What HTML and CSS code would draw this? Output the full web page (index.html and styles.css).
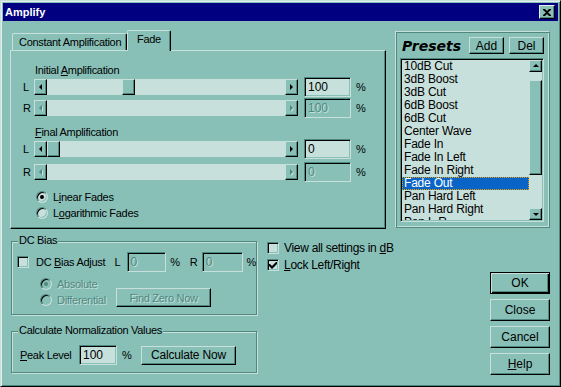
FILE: index.html
```html
<!DOCTYPE html>
<html>
<head>
<meta charset="utf-8">
<title>Amplify</title>
<link rel="stylesheet" href="styles.css">
</head>
<body>
<div class="window">
  <div class="titlebar">
    <span class="title">Amplify</span>
    <span class="closebtn"><svg width="8" height="7" viewBox="0 0 8 7"><path d="M0 0h2l2 2 2-2h2v1L5 3.5 8 6v1H6L4 5 2 7H0V6l3-2.5L0 1z" fill="#000"/></svg></span>
  </div>

  <div class="top">
    <div class="tabarea">
      <div class="tabs">
        <div class="tab">Constant Amplification</div>
        <div class="tab active">Fade</div>
      </div>
      <div class="panel">
        <div class="caption">Initial <u>A</u>mplification</div>
        <div class="row">
          <span class="ch">L</span>
          <div class="hscroll">
            <span class="sbtn"><i class="arr al"></i></span>
            <div class="track"><span class="thumb" style="margin-left:75px"></span></div>
            <span class="sbtn"><i class="arr ar"></i></span>
          </div>
          <div class="edit">100</div><span class="pct">%</span>
        </div>
        <div class="row row-b">
          <span class="ch">R</span>
          <div class="hscroll">
            <span class="sbtn"><i class="arr al off"></i></span>
            <div class="track"></div>
            <span class="sbtn"><i class="arr ar off"></i></span>
          </div>
          <div class="edit off">100</div><span class="pct">%</span>
        </div>
        <div class="caption caption-b"><u>F</u>inal Amplification</div>
        <div class="row">
          <span class="ch">L</span>
          <div class="hscroll">
            <span class="sbtn"><i class="arr al"></i></span>
            <div class="track"><span class="thumb" style="margin-left:0px"></span></div>
            <span class="sbtn"><i class="arr ar"></i></span>
          </div>
          <div class="edit">0</div><span class="pct">%</span>
        </div>
        <div class="row row-d">
          <span class="ch">R</span>
          <div class="hscroll">
            <span class="sbtn"><i class="arr al off"></i></span>
            <div class="track"></div>
            <span class="sbtn"><i class="arr ar off"></i></span>
          </div>
          <div class="edit off">0</div><span class="pct">%</span>
        </div>
        <div class="radio radio-a"><span class="rb on"></span><span>L<u>i</u>near Fades</span></div>
        <div class="radio radio-b"><span class="rb"></span><span>L<u>o</u>garithmic Fades</span></div>
      </div>
    </div>

    <div class="presets">
      <div class="presets-head">
        <span class="presets-title">Presets</span>
        <span class="btn small add">Add</span>
        <span class="btn small del">Del</span>
      </div>
      <div class="listbox">
        <div class="items">
          <div class="item">10dB Cut</div>
          <div class="item">3dB Boost</div>
          <div class="item">3dB Cut</div>
          <div class="item">6dB Boost</div>
          <div class="item">6dB Cut</div>
          <div class="item">Center Wave</div>
          <div class="item">Fade In</div>
          <div class="item">Fade In Left</div>
          <div class="item">Fade In Right</div>
          <div class="item sel">Fade Out</div>
          <div class="item">Pan Hard Left</div>
          <div class="item">Pan Hard Right</div>
          <div class="item">Pan L-R</div>
        </div>
        <div class="vscroll">
          <span class="vbtn"><i class="arr au"></i></span>
          <div class="vtrack"><span class="vthumb"></span></div>
          <span class="vbtn"><i class="arr ad"></i></span>
        </div>
      </div>
    </div>
  </div>

  <div class="bottom">
    <div class="groups">
      <div class="group dc">
        <div class="gtitle">DC Bias</div>
        <div class="dcrow">
          <span class="cb"></span>
          <span class="cblabel">DC <u>B</u>ias Adjust</span>
          <span class="lr">L</span>
          <div class="edit off small-edit">0</div><span class="pct2">%</span>
          <span class="lr lr-r">R</span>
          <div class="edit off small-edit r-edit">0</div><span class="pct2">%</span>
        </div>
        <div class="dclow">
          <div class="dcradios">
            <div class="radio2"><span class="rb dim on"></span><span class="dis">Absolute</span></div>
            <div class="radio2 r2b"><span class="rb dim"></span><span class="dis">Differential</span></div>
          </div>
          <span class="btn findzero dis">Find Zero Now</span>
        </div>
      </div>
      <div class="group norm">
        <div class="gtitle">Calculate Normalization Values</div>
        <div class="normrow">
          <span class="peak"><u>P</u>eak Level</span>
          <div class="edit peak-edit">100</div><span class="pct3">%</span>
          <span class="btn calc">Calculate Now</span>
        </div>
      </div>
    </div>

    <div class="checks">
      <div class="check"><span class="cb"></span><span>View all settings in <u>d</u>B</span></div>
      <div class="check"><span class="cb"><svg width="8" height="8" viewBox="0 0 8 8"><path d="M0 3l1 0 2 2 4-4 1 0 0 2-5 5-3-3z" fill="#000"/></svg></span><span><u>L</u>ock Left/Right</span></div>
    </div>

    <div class="buttons">
      <span class="btn big default">OK</span>
      <span class="btn big">Close</span>
      <span class="btn big">Cancel</span>
      <span class="btn big"><u>H</u>elp</span>
    </div>
  </div>
</div>
</body>
</html>
```

FILE: styles.css
```css
:root {
  --face: #88c0b8;
  --light: #c8e0dc;
  --hi: #e0f0ec;
  --shadow: #508880;
  --dark: #000;
  --navy: #000080;
}

* { box-sizing: border-box; margin: 0; padding: 0; }

body {
  margin: 0;
  background: var(--face);
  font: 11px "Liberation Sans", Arial, sans-serif;
  letter-spacing: -0.3px;
  color: #000;
}

u { text-decoration: underline; text-underline-offset: 1px; }

.window {
  width: 561px;
  height: 387px;
  background: var(--face);
  border: 1px solid;
  border-color: var(--light) var(--dark) var(--dark) var(--light);
  box-shadow: inset 1px 1px 0 var(--hi), inset -1px -1px 0 var(--shadow);
  padding: 2px;
}

/* title bar */
.titlebar {
  height: 18px;
  background: var(--navy);
  display: flex;
  align-items: center;
  justify-content: space-between;
  padding: 0 3px 0 2px;
}
.title {
  color: #fff;
  font-weight: bold;
  letter-spacing: 0;
}
.closebtn {
  width: 16px;
  height: 14px;
  background: var(--face);
  border: 1px solid;
  border-color: var(--hi) var(--dark) var(--dark) var(--hi);
  box-shadow: inset -1px -1px 0 var(--shadow);
  display: flex;
  align-items: center;
  justify-content: center;
  padding-right: 1px;
}

/* top area */
.top {
  display: flex;
  margin-top: 9px;
  padding-left: 7px;
}
.tabarea { width: 376px; }
.tabs {
  height: 20px;
  display: flex;
  align-items: flex-end;
  padding-left: 2px;
}
.tab {
  height: 17px;
  padding: 2px 0 0 6px;
  width: 115px;
  background: var(--face);
  border-top: 1px solid var(--light);
  border-left: 1px solid var(--light);
  border-right: 1px solid var(--dark);
  box-shadow: inset -1px 0 0 var(--shadow);
  border-radius: 2px 2px 0 0;
  line-height: 13px;
}
.tab.active {
  width: 44px;
  height: 21px;
  margin-bottom: -1px;
  padding: 2px 0 0 9px;
  position: relative;
  z-index: 1;
}
.panel {
  height: 179px;
  border: 1px solid;
  border-color: var(--light) var(--dark) var(--dark) var(--light);
  box-shadow: inset -1px -1px 0 var(--shadow);
  padding-top: 13px;
}
.caption {
  line-height: 13px;
  height: 13px;
  padding-left: 24px;
}
.caption-b { margin-top: 8px; }
.row {
  height: 20px;
  display: flex;
  align-items: center;
  padding-left: 12px;
}
.row-b { margin-top: 1px; }
.row-d { margin-top: 3px; }
.ch { width: 11px; }

.hscroll {
  width: 264px;
  height: 16px;
  display: flex;
}
.sbtn, .thumb, .vbtn, .vthumb {
  background: var(--face);
  border: 1px solid;
  border-color: var(--light) var(--dark) var(--dark) var(--light);
  box-shadow: inset -1px -1px 0 var(--shadow);
}
.sbtn {
  width: 13px;
  height: 16px;
  display: flex;
  align-items: center;
  justify-content: center;
}
.track {
  flex: 1;
  background: var(--light);
  display: flex;
}
.thumb {
  display: block;
  width: 13px;
  height: 16px;
}

.arr { display: block; width: 0; height: 0; border-style: solid; }
.al { border-width: 3px 3px 3px 0; border-color: transparent #000 transparent transparent; margin-right: 1px; }
.ar { border-width: 3px 0 3px 3px; border-color: transparent transparent transparent #000; }
.au { border-width: 0 3px 3px 3px; border-color: transparent transparent #000 transparent; margin-bottom: 1px; }
.ad { border-width: 3px 3px 0 3px; border-color: #000 transparent transparent transparent; }
.al.off { border-color: transparent var(--shadow) transparent transparent; filter: drop-shadow(1px 1px 0 var(--light)); }
.ar.off { border-color: transparent transparent transparent var(--shadow); filter: drop-shadow(1px 1px 0 var(--light)); }

.edit {
  width: 47px;
  height: 20px;
  margin-left: 6px;
  background: var(--light);
  border: 1px solid;
  border-color: var(--shadow) var(--light) var(--light) var(--shadow);
  box-shadow: inset 1px 1px 0 var(--dark), inset -1px -1px 0 var(--face);
  padding: 2px 0 0 3px;
  line-height: 14px;
  font-size: 12px;
  letter-spacing: 0;
}
.edit.off {
  background: var(--face);
  color: var(--shadow);
  text-shadow: 1px 1px 0 var(--light);
}
.pct { margin-left: 5px; }

.radio {
  height: 13px;
  display: flex;
  align-items: center;
  padding-left: 25px;
  gap: 5px;
}
.radio-a { margin-top: 8px; }
.radio-b { margin-top: 3px; }

.rb {
  width: 12px;
  height: 12px;
  border-radius: 50%;
  border: 1px solid;
  border-color: var(--shadow) var(--light) var(--light) var(--shadow);
  box-shadow: inset 1px 1px 0 var(--dark), inset -1px -1px 0 var(--face);
  background: var(--light);
  display: flex;
  align-items: center;
  justify-content: center;
  flex: none;
}
.rb.on::after {
  content: "";
  width: 4px;
  height: 4px;
  border-radius: 50%;
  background: #000;
}
.rb.dim { background: var(--face); }
.rb.dim.on::after { background: var(--shadow); }

/* presets */
.presets {
  width: 155px;
  height: 197px;
  margin: 1px 0 0 9px;
  border: 1px solid;
  border-color: var(--light) var(--shadow) var(--shadow) var(--light);
  box-shadow: inset 1px 1px 0 var(--shadow), inset -1px -1px 0 var(--light);
  padding: 5px 3px 0 4px;
}
.presets-head {
  height: 17px;
  display: flex;
  align-items: center;
}
.presets-title {
  font: italic bold 14px "DejaVu Sans", sans-serif;
  letter-spacing: 0;
  margin-left: 2px;
  margin-top: 1px;
}
.btn {
  background: var(--face);
  border: 1px solid;
  border-color: var(--light) var(--dark) var(--dark) var(--light);
  box-shadow: inset -1px -1px 0 var(--shadow);
  display: flex;
  align-items: center;
  justify-content: center;
}
.btn.small {
  width: 35px;
  height: 17px;
  font-size: 12px;
  letter-spacing: 0;
}
.add { margin-left: auto; }
.del { margin-left: 5px; margin-right: 2px; }

.listbox {
  margin-top: 4px;
  width: 144px;
  height: 164px;
  background: var(--light);
  border: 1px solid;
  border-color: var(--shadow) var(--light) var(--light) var(--shadow);
  box-shadow: inset 1px 1px 0 var(--dark), inset -1px -1px 0 var(--face);
  padding: 1px;
  display: flex;
}
.items {
  flex: 1;
  overflow: hidden;
}
.item {
  height: 13px;
  line-height: 13px;
  padding-left: 2px;
  font-size: 12px;
  letter-spacing: -0.2px;
  white-space: nowrap;
}
.item.sel {
  background: #0a64c8;
  color: #fff;
  outline: 1px dotted #e8a000;
  outline-offset: -1px;
}
.vscroll {
  width: 13px;
  display: flex;
  flex-direction: column;
}
.vbtn {
  height: 12px;
  display: flex;
  align-items: center;
  justify-content: center;
}
.vtrack {
  flex: 1;
  background: var(--light);
  padding-top: 8px;
}
.vthumb {
  display: block;
  height: 95px;
}

/* bottom */
.bottom {
  display: flex;
  padding-left: 8px;
}
.groups { width: 246px; }
.group {
  border: 1px solid var(--shadow);
  box-shadow: inset 1px 1px 0 var(--light), 1px 1px 0 var(--light);
}
.gtitle {
  width: fit-content;
  margin: -8px 0 0 6px;
  padding: 0 1px;
  background: var(--face);
  line-height: 13px;
}
.dc {
  margin-top: 12px;
  height: 74px;
}
.dcrow {
  margin-top: 4px;
  height: 21px;
  display: flex;
  align-items: center;
  padding-left: 5px;
}
.cb {
  width: 12px;
  height: 12px;
  background: var(--light);
  border: 1px solid;
  border-color: var(--shadow) var(--light) var(--light) var(--shadow);
  box-shadow: inset 1px 1px 0 var(--dark), inset -1px -1px 0 var(--face);
  flex: none;
  display: flex;
  align-items: center;
  justify-content: center;
}
.cblabel { margin-left: 7px; width: 72px; }
.lr { width: 12px; margin-left: 7px; }
.lr-r { margin-left: 10px; }
.small-edit { width: 40px; margin-left: 0; }
.r-edit { width: 41px; }
.pct2 { margin-left: 4px; }

.dclow {
  display: flex;
  align-items: flex-start;
}
.dcradios {
  width: 104px;
  padding-left: 28px;
  padding-top: 5px;
}
.radio2 {
  height: 13px;
  display: flex;
  align-items: center;
  gap: 5px;
}
.r2b { margin-top: 3px; }
.dis {
  color: var(--shadow);
  text-shadow: 1px 1px 0 var(--light);
}
.findzero {
  width: 95px;
  height: 19px;
  margin-top: 16px;
}

.norm {
  margin-top: 16px;
  height: 42px;
}
.normrow {
  margin-top: 8px;
  display: flex;
  align-items: center;
  padding-left: 8px;
}
.peak { width: 59px; }
.peak-edit { width: 38px; margin-left: 0; }
.pct3 { margin-left: 5px; width: 19px; }
.calc {
  width: 95px;
  height: 19px;
  font-size: 12px;
  letter-spacing: -0.2px;
}

.checks {
  margin-left: 10px;
  margin-top: 13px;
  display: flex;
  flex-direction: column;
  gap: 5px;
}
.check {
  height: 12px;
  display: flex;
  align-items: center;
  gap: 5px;
  font-size: 12px;
  letter-spacing: -0.3px;
}

.buttons {
  margin: 43px 8px 0 auto;
  display: flex;
  flex-direction: column;
  gap: 5px;
}
.btn.big {
  width: 60px;
  height: 22px;
  font-size: 12px;
  letter-spacing: 0;
}
.btn.default {
  border-color: var(--dark);
  box-shadow: inset 1px 1px 0 var(--light), inset -1px -1px 0 var(--dark), inset -2px -2px 0 var(--shadow);
}
```
